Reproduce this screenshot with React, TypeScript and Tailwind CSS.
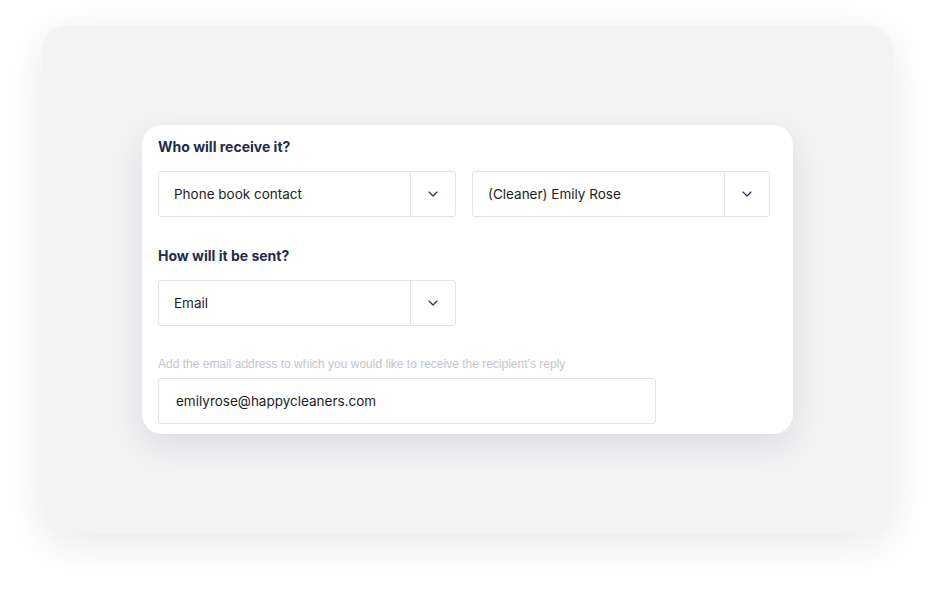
import { ReactNode } from 'react';

function Chevron() {
  return (
    <svg className="w-[10px] h-[6px]" viewBox="0 0 10 6" fill="none">
      <path d="M1 1l4 4 4-4" stroke="#1f2a4d" strokeWidth="1.1" strokeLinecap="round" strokeLinejoin="round" />
    </svg>
  );
}

function Select({ value }: { value: string }) {
  return (
    <div className="flex h-[46px] w-[298px] rounded-[3px] border border-[#e3e3e8] bg-white">
      <div className="flex flex-1 items-center pl-[15px] text-[13.5px] text-[#1d1d24]">{value}</div>
      <div className="flex w-[45px] items-center justify-center border-l border-[#e3e3e8]">
        <Chevron />
      </div>
    </div>
  );
}

function Heading({ children }: { children: ReactNode }) {
  return <h3 className="text-[14px] font-bold leading-[20px] text-[#1f2a4d]">{children}</h3>;
}

export default function App() {
  return (
    <div className="h-[594px] w-[935px] bg-white pt-[25px] pl-[42px]" style={{ fontFamily: 'Inter, "Noto Sans", sans-serif' }}>
      <div className="h-[509px] w-[851px] rounded-[26px] bg-[#f3f3f4] pt-[100px] pl-[100px] shadow-[0_10px_40px_rgba(30,40,80,0.10)]">
        <div className="w-[651px] rounded-[20px] bg-white pt-[12px] pb-[10px] pl-[16px] shadow-[0_12px_32px_rgba(30,40,80,0.10)]">
          <Heading>Who will receive it?</Heading>
          <div className="mt-[14px] flex gap-[16px]">
            <Select value="Phone book contact" />
            <Select value="(Cleaner) Emily Rose" />
          </div>
          <div className="mt-[29px]">
            <Heading>How will it be sent?</Heading>
          </div>
          <div className="mt-[14px]">
            <Select value="Email" />
          </div>
          <p className="mt-[31px] text-[12px] leading-[14px] text-[#c4c4cc]" style={{ fontFamily: '"Liberation Sans", Arial, sans-serif' }}>
            Add the email address to which you would like to receive the recipient’s reply
          </p>
          <div className="mt-[7px] flex h-[46px] w-[498px] items-center rounded-[3px] border border-[#e3e3e8] pl-[17px] text-[13.5px] text-[#1d1d24]">
            emilyrose@happycleaners.com
          </div>
        </div>
      </div>
    </div>
  );
}
